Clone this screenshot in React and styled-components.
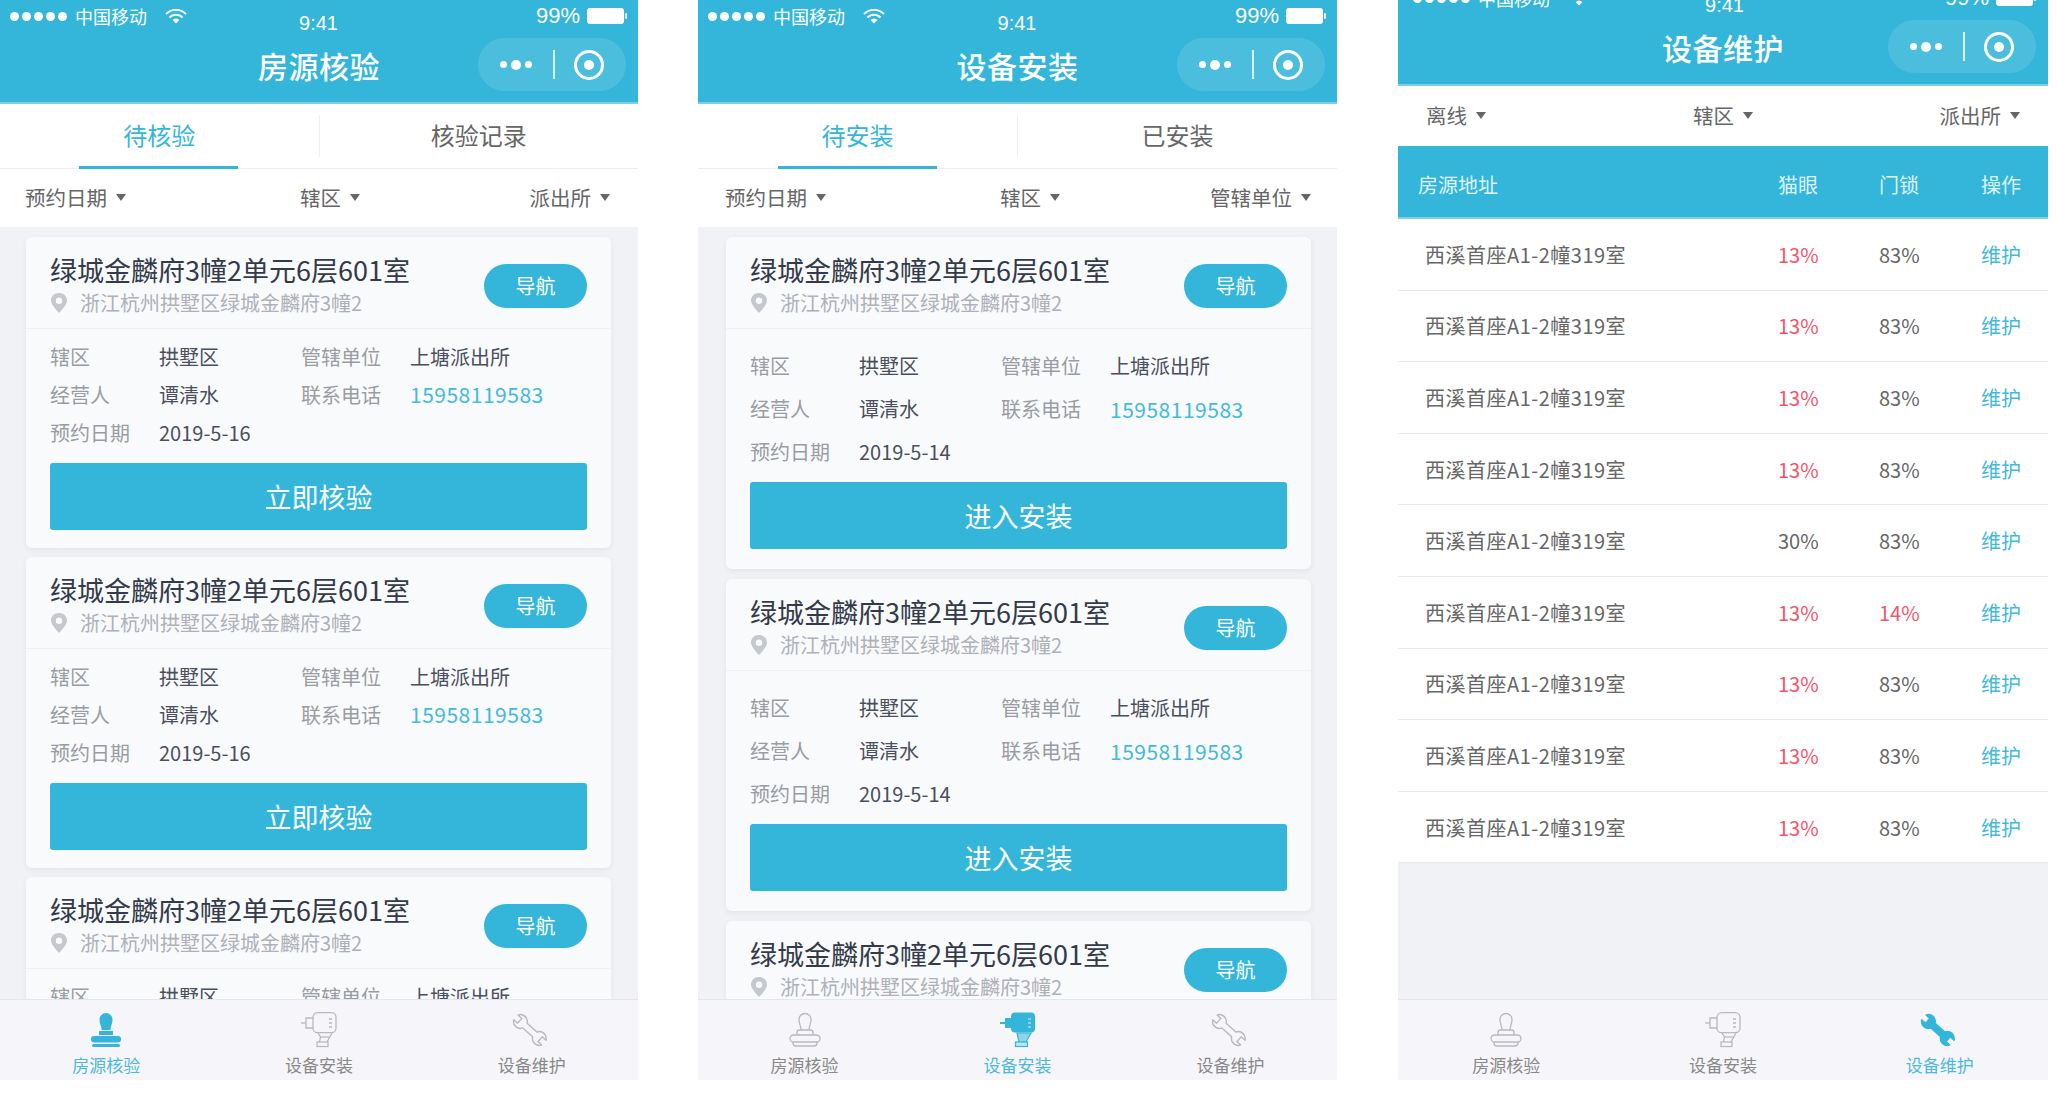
import React from "react";
import styled, { createGlobalStyle } from "styled-components";

const BLUE = "#33b6da";

const GlobalStyle = createGlobalStyle`
  body {
    margin: 0;
    background: #fff;
    font-family: "Noto Sans CJK SC", "Liberation Sans", sans-serif;
  }
`;

const Page = styled.div`
  display: flex;
  width: 2058px;
  height: 1110px;
  align-items: flex-start;
`;

const Phone = styled.div`
  width: ${(p) => p.$width}px;
  height: 1080px;
  margin-right: ${(p) => p.$gap}px;
  display: flex;
  flex-direction: column;
  overflow: hidden;
  background: #f0f2f5;
`;

const Header = styled.header`
  flex: none;
  height: ${(p) => (p.$clipped ? 86 : 104)}px;
  background: ${BLUE};
  border-bottom: 2px solid #7ccfe8;
  box-sizing: border-box;
  color: #fff;
`;

const StatusBar = styled.div`
  display: grid;
  grid-template-columns: 1fr auto 1fr;
  height: 38px;
  margin-top: ${(p) => (p.$clipped ? -18 : 0)}px;
  padding: 0 ${(p) => (p.$clipped ? 12 : 11)}px 0 ${(p) => (p.$clipped ? 15 : 10)}px;
`;

const StatusLeft = styled.div`
  display: flex;
  align-items: center;
  height: 32px;
  font-size: 18px;
`;

const SignalDots = styled.div`
  display: flex;
  gap: 3px;
  margin-right: 8px;
`;

const SignalDot = styled.span`
  width: 9px;
  height: 9px;
  border-radius: 50%;
  background: #fff;
`;

const WifiSlot = styled.span`
  display: flex;
  margin-left: 18px;
`;

const Clock = styled.div`
  font-size: 20px;
  line-height: 24px;
  padding-top: 11px;
  font-family: "Liberation Sans", sans-serif;
`;

const StatusRight = styled.div`
  display: flex;
  align-items: center;
  justify-content: flex-end;
  height: 32px;
  gap: 7px;
  font-size: 22px;
  font-family: "Liberation Sans", sans-serif;
`;

const NavBar = styled.div`
  display: grid;
  grid-template-columns: 1fr auto 1fr;
  align-items: center;
  height: 53px;
`;

const NavTitle = styled.h1`
  grid-column: 2;
  margin: 1px 0 0;
  font-size: 30px;
  line-height: 40px;
  font-weight: 500;
  letter-spacing: 0.5px;
`;

const Capsule = styled.div`
  grid-column: 3;
  justify-self: end;
  display: flex;
  align-items: center;
  width: 148px;
  height: 53px;
  margin-right: 12px;
  box-sizing: border-box;
  padding-left: 22px;
  border-radius: 27px;
  background: rgba(255, 255, 255, 0.12);
`;

const MoreDots = styled.div`
  display: flex;
  align-items: center;
  gap: 4px;
`;

const MoreDot = styled.span`
  width: ${(p) => (p.$big ? 10 : 7)}px;
  height: ${(p) => (p.$big ? 10 : 7)}px;
  border-radius: 50%;
  background: #fff;
`;

const CapsuleDivider = styled.span`
  width: 2px;
  height: 29px;
  margin: 0 19px 0 21px;
  background: rgba(255, 255, 255, 0.8);
`;

const TargetRing = styled.span`
  display: flex;
  align-items: center;
  justify-content: center;
  width: 30px;
  height: 30px;
  box-sizing: border-box;
  border: 3px solid #fff;
  border-radius: 50%;

  &::after {
    content: "";
    width: 10px;
    height: 10px;
    border-radius: 50%;
    background: #fff;
  }
`;

const Tabs = styled.div`
  flex: none;
  display: flex;
  align-items: center;
  height: 65px;
  background: #fff;
  border-bottom: 1px solid #eceef1;
  box-sizing: border-box;
`;

const Tab = styled.div`
  position: relative;
  flex: 1;
  height: 100%;
  box-sizing: border-box;
  padding-bottom: 3px;
  display: flex;
  align-items: center;
  justify-content: center;
  font-size: 24px;
  color: ${(p) => (p.$active ? BLUE : "#666")};

  &::after {
    content: "";
    display: ${(p) => (p.$active ? "block" : "none")};
    position: absolute;
    bottom: -1px;
    left: 50%;
    width: 159px;
    height: 3px;
    margin-left: -80px;
    background: ${BLUE};
  }
`;

const TabDivider = styled.span`
  flex: none;
  width: 1px;
  height: 42px;
  background: #eceef1;
`;

const Filters = styled.div`
  flex: none;
  display: grid;
  grid-template-columns: ${(p) => p.$lead} auto 1fr;
  align-items: center;
  height: ${(p) => p.$height}px;
  box-sizing: border-box;
  padding: 0 ${(p) => p.$right}px 2px ${(p) => p.$left}px;
  background: #fff;
`;

const Filter = styled.div`
  display: flex;
  align-items: center;
  gap: 9px;
  font-size: 20.5px;
  color: #666;

  &:last-child {
    justify-self: end;
  }
`;

const Caret = styled.span`
  width: 0;
  height: 0;
  border-left: 5px solid transparent;
  border-right: 5px solid transparent;
  border-top: 7px solid #666;
`;

const Content = styled.main`
  flex: 1;
  min-height: 0;
  overflow: hidden;
  display: flex;
  flex-direction: column;
  gap: ${(p) => p.$gap}px;
  padding: 10px ${(p) => p.$right}px 0 ${(p) => p.$left}px;
`;

const Card = styled.article`
  flex: none;
  border-radius: 6px;
  background: #f9fafc;
  box-shadow: 0 2px 6px rgba(0, 0, 0, 0.06);
  padding-bottom: ${(p) => p.$bottom}px;
`;

const CardHead = styled.div`
  display: flex;
  align-items: center;
  justify-content: space-between;
  height: 92px;
  box-sizing: border-box;
  padding: 15px 24px 14px;
  border-bottom: 1px solid #f0f1f4;
`;

const CardTitle = styled.div`
  font-size: 27px;
  line-height: 36px;
  color: #333a4a;
  white-space: nowrap;
`;

const CardAddress = styled.div`
  display: flex;
  align-items: center;
  gap: 12px;
  margin-top: 3px;
  font-size: 20px;
  line-height: 24px;
  color: #aeb1b8;
`;

const NavButton = styled.button`
  flex: none;
  width: 103px;
  height: 44px;
  margin-top: 5px;
  border: 0;
  border-radius: 22px;
  background: ${BLUE};
  color: #fff;
  font: inherit;
  font-size: 20px;
`;

const Details = styled.div`
  display: grid;
  grid-template-columns: 109px 142px 109px 1fr;
  grid-auto-rows: ${(p) => p.$rowHeight}px;
  align-items: center;
  padding: ${(p) => p.$top}px 24px ${(p) => p.$bottom}px;
  font-size: 20px;
`;

const Label = styled.span`
  color: #999ca3;
`;

const Value = styled.span`
  color: #4a4f5c;
  white-space: nowrap;
`;

const PhoneNumber = styled.span`
  color: #43b9dc;
  font-size: 21px;
  letter-spacing: 0.5px;
`;

const ActionButton = styled.button`
  display: block;
  width: 537px;
  height: 67px;
  margin-left: 24px;
  border: 0;
  border-radius: 3px;
  background: ${BLUE};
  color: #fff;
  font: inherit;
  font-size: 27px;
`;

const TableHead = styled.div`
  flex: none;
  display: grid;
  grid-template-columns: 360px 101px 102px 1fr;
  align-items: center;
  height: 73px;
  box-sizing: border-box;
  padding: 6px 0 0 20px;
  background: ${BLUE};
  border-bottom: 2px solid #7ccfe8;
  color: #dff4fa;
  font-size: 20px;
`;

const TableRow = styled.div`
  flex: none;
  display: grid;
  grid-template-columns: 353px 101px 102px 1fr;
  align-items: center;
  height: 71.6px;
  box-sizing: border-box;
  padding-left: 27px;
  background: #fff;
  border-bottom: 1px solid #e9ebef;
  color: #666;
  font-size: 20px;
`;

const RowAddress = styled.span`
  letter-spacing: 0.5px;
`;

const Percent = styled.span`
  color: ${(p) => (p.$low ? "#f0566c" : "#666")};
`;

const RowLink = styled.span`
  color: #43b9dc;
`;

const TableFill = styled.div`
  flex: 1;
  min-height: 0;
`;

const TabBar = styled.nav`
  flex: none;
  display: grid;
  grid-template-columns: repeat(3, 1fr);
  height: 81px;
  box-sizing: border-box;
  background: #f6f6fa;
  border-top: 1px solid #e6e6ea;
`;

const TabBarItem = styled.div`
  display: flex;
  flex-direction: column;
  align-items: center;
  padding-top: 12px;
  font-size: 17px;
  line-height: 20px;
  color: ${(p) => (p.$active ? "#4cb9dc" : "#888")};
`;

const IconBox = styled.svg`
  display: block;
  width: 36px;
  height: 36px;
  margin-bottom: 7px;
  overflow: visible;
`;

const WifiIcon = () => (
  <svg width="22" height="15" viewBox="0 0 22 15" fill="none" stroke="#fff" strokeWidth="2">
    <path d="M1 5 a14 14 0 0 1 20 0" />
    <path d="M4.5 8.5 a9 9 0 0 1 13 0" />
    <path d="M11 14.5 L7.6 11 a5 5 0 0 1 6.8 0 Z" fill="#fff" stroke="none" />
  </svg>
);

const BatteryIcon = () => (
  <svg width="40" height="16" viewBox="0 0 40 16">
    <rect x="0.5" y="0.5" width="36" height="15" rx="2" fill="#fff" stroke="#fff" />
    <rect x="38" y="5" width="2" height="6" rx="1" fill="#fff" />
  </svg>
);

const PinIcon = () => (
  <svg width="18" height="20" viewBox="0 0 18 20">
    <path
      fillRule="evenodd"
      d="M9 0 C4 0 1 3.6 1 7.6 C1 12.5 9 20 9 20 C9 20 17 12.5 17 7.6 C17 3.6 14 0 9 0 Z M9 4.6 A3.2 3.2 0 1 1 9 11 A3.2 3.2 0 1 1 9 4.6 Z"
      fill="#c5c8cd"
    />
  </svg>
);

const StampIcon = ({ active }) =>
  active ? (
    <IconBox viewBox="0 0 36 36" fill={BLUE}>
      <path d="M13.5 18 C13.5 14 11.5 12 11.5 7.5 A6.5 6.5 0 0 1 24.5 7.5 C24.5 12 22.5 14 22.5 18 Z" />
      <rect x="11" y="19" width="14" height="4" />
      <rect x="3" y="24" width="30" height="6.5" rx="3" />
      <rect x="4" y="32" width="28" height="3" rx="1.5" />
    </IconBox>
  ) : (
    <IconBox viewBox="0 0 36 36" fill="none" stroke="#b8b9be" strokeWidth="1.3">
      <path d="M14 18 C14 14 12 12 12 7.5 A6 6 0 0 1 24 7.5 C24 12 22 14 22 18" />
      <path d="M10 23 V20.5 Q10 18 12.5 18 H23.5 Q26 18 26 20.5 V23" />
      <rect x="3" y="23" width="30" height="7" rx="3.5" />
      <path d="M6 30 V31 Q6 34 9 34 H27 Q30 34 30 31 V30" />
    </IconBox>
  );

const DrillIcon = ({ active }) =>
  active ? (
    <IconBox viewBox="0 0 36 36" fill={BLUE}>
      <rect x="0" y="10" width="6" height="2" />
      <rect x="5" y="6" width="8" height="10" />
      <rect x="11" y="0.5" width="24" height="20" rx="4" />
      <path d="M28 7 H31 M28 11 H31 M28 15 H31" stroke="#d9f1f8" strokeWidth="1.2" />
      <path d="M17 21 H31 L26 30 H19 Z" fill="#8fd4e9" stroke={BLUE} strokeWidth="1.2" />
      <rect x="15.5" y="30" width="12" height="4.5" fill="#bde6f2" stroke={BLUE} strokeWidth="1.2" />
    </IconBox>
  ) : (
    <IconBox viewBox="0 0 36 36" fill="none" stroke="#b8b9be" strokeWidth="1.3">
      <path d="M0 11 H5" />
      <path d="M12 6 H5 V16 H12" />
      <rect x="12" y="0.7" width="23" height="20" rx="4.5" />
      <path d="M28 7 H31 M28 11 H31 M28 15 H31" />
      <path d="M17 21 L19.5 25 L18.5 30 M31 21 L26 30" />
      <path d="M19.5 25 L28 25" />
      <rect x="16" y="30" width="11" height="4.5" />
    </IconBox>
  );

const WrenchIcon = ({ active }) => (
  <IconBox
    viewBox="1 1 34 34"
    fill={active ? BLUE : "none"}
    stroke={active ? BLUE : "#b8b9be"}
    strokeWidth="1.3"
    strokeLinejoin="round"
  >
    <path
      transform="translate(-2 0) rotate(42 18 18)"
      d="M11.77 15 A6.5 6.5 0 0 0 0.23 15 L5 15 L5 21 L0.23 21 A6.5 6.5 0 0 0 11.77 21 L24.23 21 A6.5 6.5 0 0 0 35.77 21 L31 21 L31 15 L35.77 15 A6.5 6.5 0 0 0 24.23 15 Z"
    />
  </IconBox>
);

const TAB_ITEMS = [
  { key: "verify", label: "房源核验", Icon: StampIcon },
  { key: "install", label: "设备安装", Icon: DrillIcon },
  { key: "repair", label: "设备维护", Icon: WrenchIcon },
];

const AppHeader = ({ title, clipped }) => (
  <Header $clipped={clipped}>
    <StatusBar $clipped={clipped}>
      <StatusLeft>
        <SignalDots>
          {[0, 1, 2, 3, 4].map((i) => (
            <SignalDot key={i} />
          ))}
        </SignalDots>
        中国移动
        <WifiSlot>
          <WifiIcon />
        </WifiSlot>
      </StatusLeft>
      <Clock>9:41</Clock>
      <StatusRight>
        99%
        <BatteryIcon />
      </StatusRight>
    </StatusBar>
    <NavBar>
      <NavTitle>{title}</NavTitle>
      <Capsule>
        <MoreDots>
          <MoreDot />
          <MoreDot $big />
          <MoreDot />
        </MoreDots>
        <CapsuleDivider />
        <TargetRing />
      </Capsule>
    </NavBar>
  </Header>
);

const BottomTabs = ({ active }) => (
  <TabBar>
    {TAB_ITEMS.map(({ key, label, Icon }) => (
      <TabBarItem key={key} $active={key === active}>
        <Icon active={key === active} />
        {label}
      </TabBarItem>
    ))}
  </TabBar>
);

const TopTabs = ({ first, second }) => (
  <Tabs>
    <Tab $active>{first}</Tab>
    <TabDivider />
    <Tab>{second}</Tab>
  </Tabs>
);

const FilterBar = ({ items, lead = "275px", left = 25, right = 28, height = 58 }) => (
  <Filters $lead={lead} $left={left} $right={right} $height={height}>
    {items.map((item) => (
      <Filter key={item}>
        {item}
        <Caret />
      </Filter>
    ))}
  </Filters>
);

const OrderCard = ({ date, action, rowHeight, top, gap, bottom }) => (
  <Card $bottom={bottom}>
    <CardHead>
      <div>
        <CardTitle>绿城金麟府3幢2单元6层601室</CardTitle>
        <CardAddress>
          <PinIcon />
          浙江杭州拱墅区绿城金麟府3幢2
        </CardAddress>
      </div>
      <NavButton>导航</NavButton>
    </CardHead>
    <Details $rowHeight={rowHeight} $top={top} $bottom={gap}>
      <Label>辖区</Label>
      <Value>拱墅区</Value>
      <Label>管辖单位</Label>
      <Value>上塘派出所</Value>
      <Label>经营人</Label>
      <Value>谭清水</Value>
      <Label>联系电话</Label>
      <PhoneNumber>15958119583</PhoneNumber>
      <Label>预约日期</Label>
      <Value>{date}</Value>
    </Details>
    <ActionButton>{action}</ActionButton>
  </Card>
);

const REPAIR_ROWS = [
  ["13%", "83%"],
  ["13%", "83%"],
  ["13%", "83%"],
  ["13%", "83%"],
  ["30%", "83%"],
  ["13%", "14%"],
  ["13%", "83%"],
  ["13%", "83%"],
  ["13%", "83%"],
];

const isLow = (value) => parseInt(value, 10) < 20;

export default function App() {
  const verify = { date: "2019-5-16", action: "立即核验", rowHeight: 38, top: 8, gap: 12, bottom: 18 };
  const install = { date: "2019-5-14", action: "进入安装", rowHeight: 43, top: 15, gap: 9, bottom: 20 };

  return (
    <Page>
      <GlobalStyle />
      <Phone $width={638} $gap={60}>
        <AppHeader title="房源核验" />
        <TopTabs first="待核验" second="核验记录" />
        <FilterBar items={["预约日期", "辖区", "派出所"]} />
        <Content $gap={9} $left={26} $right={27}>
          <OrderCard {...verify} />
          <OrderCard {...verify} />
          <OrderCard {...verify} />
        </Content>
        <BottomTabs active="verify" />
      </Phone>

      <Phone $width={639} $gap={61}>
        <AppHeader title="设备安装" />
        <TopTabs first="待安装" second="已安装" />
        <FilterBar items={["预约日期", "辖区", "管辖单位"]} left={27} right={26} />
        <Content $gap={10} $left={28} $right={26}>
          <OrderCard {...install} />
          <OrderCard {...install} />
          <OrderCard {...install} />
        </Content>
        <BottomTabs active="install" />
      </Phone>

      <Phone $width={650} $gap={0}>
        <AppHeader title="设备维护" clipped />
        <FilterBar items={["离线", "辖区", "派出所"]} lead="1fr" left={28} height={60} />
        <TableHead>
          <span>房源地址</span>
          <span>猫眼</span>
          <span>门锁</span>
          <span>操作</span>
        </TableHead>
        {REPAIR_ROWS.map(([eye, lock], i) => (
          <TableRow key={i}>
            <RowAddress>西溪首座A1-2幢319室</RowAddress>
            <Percent $low={isLow(eye)}>{eye}</Percent>
            <Percent $low={isLow(lock)}>{lock}</Percent>
            <RowLink>维护</RowLink>
          </TableRow>
        ))}
        <TableFill />
        <BottomTabs active="repair" />
      </Phone>
    </Page>
  );
}
